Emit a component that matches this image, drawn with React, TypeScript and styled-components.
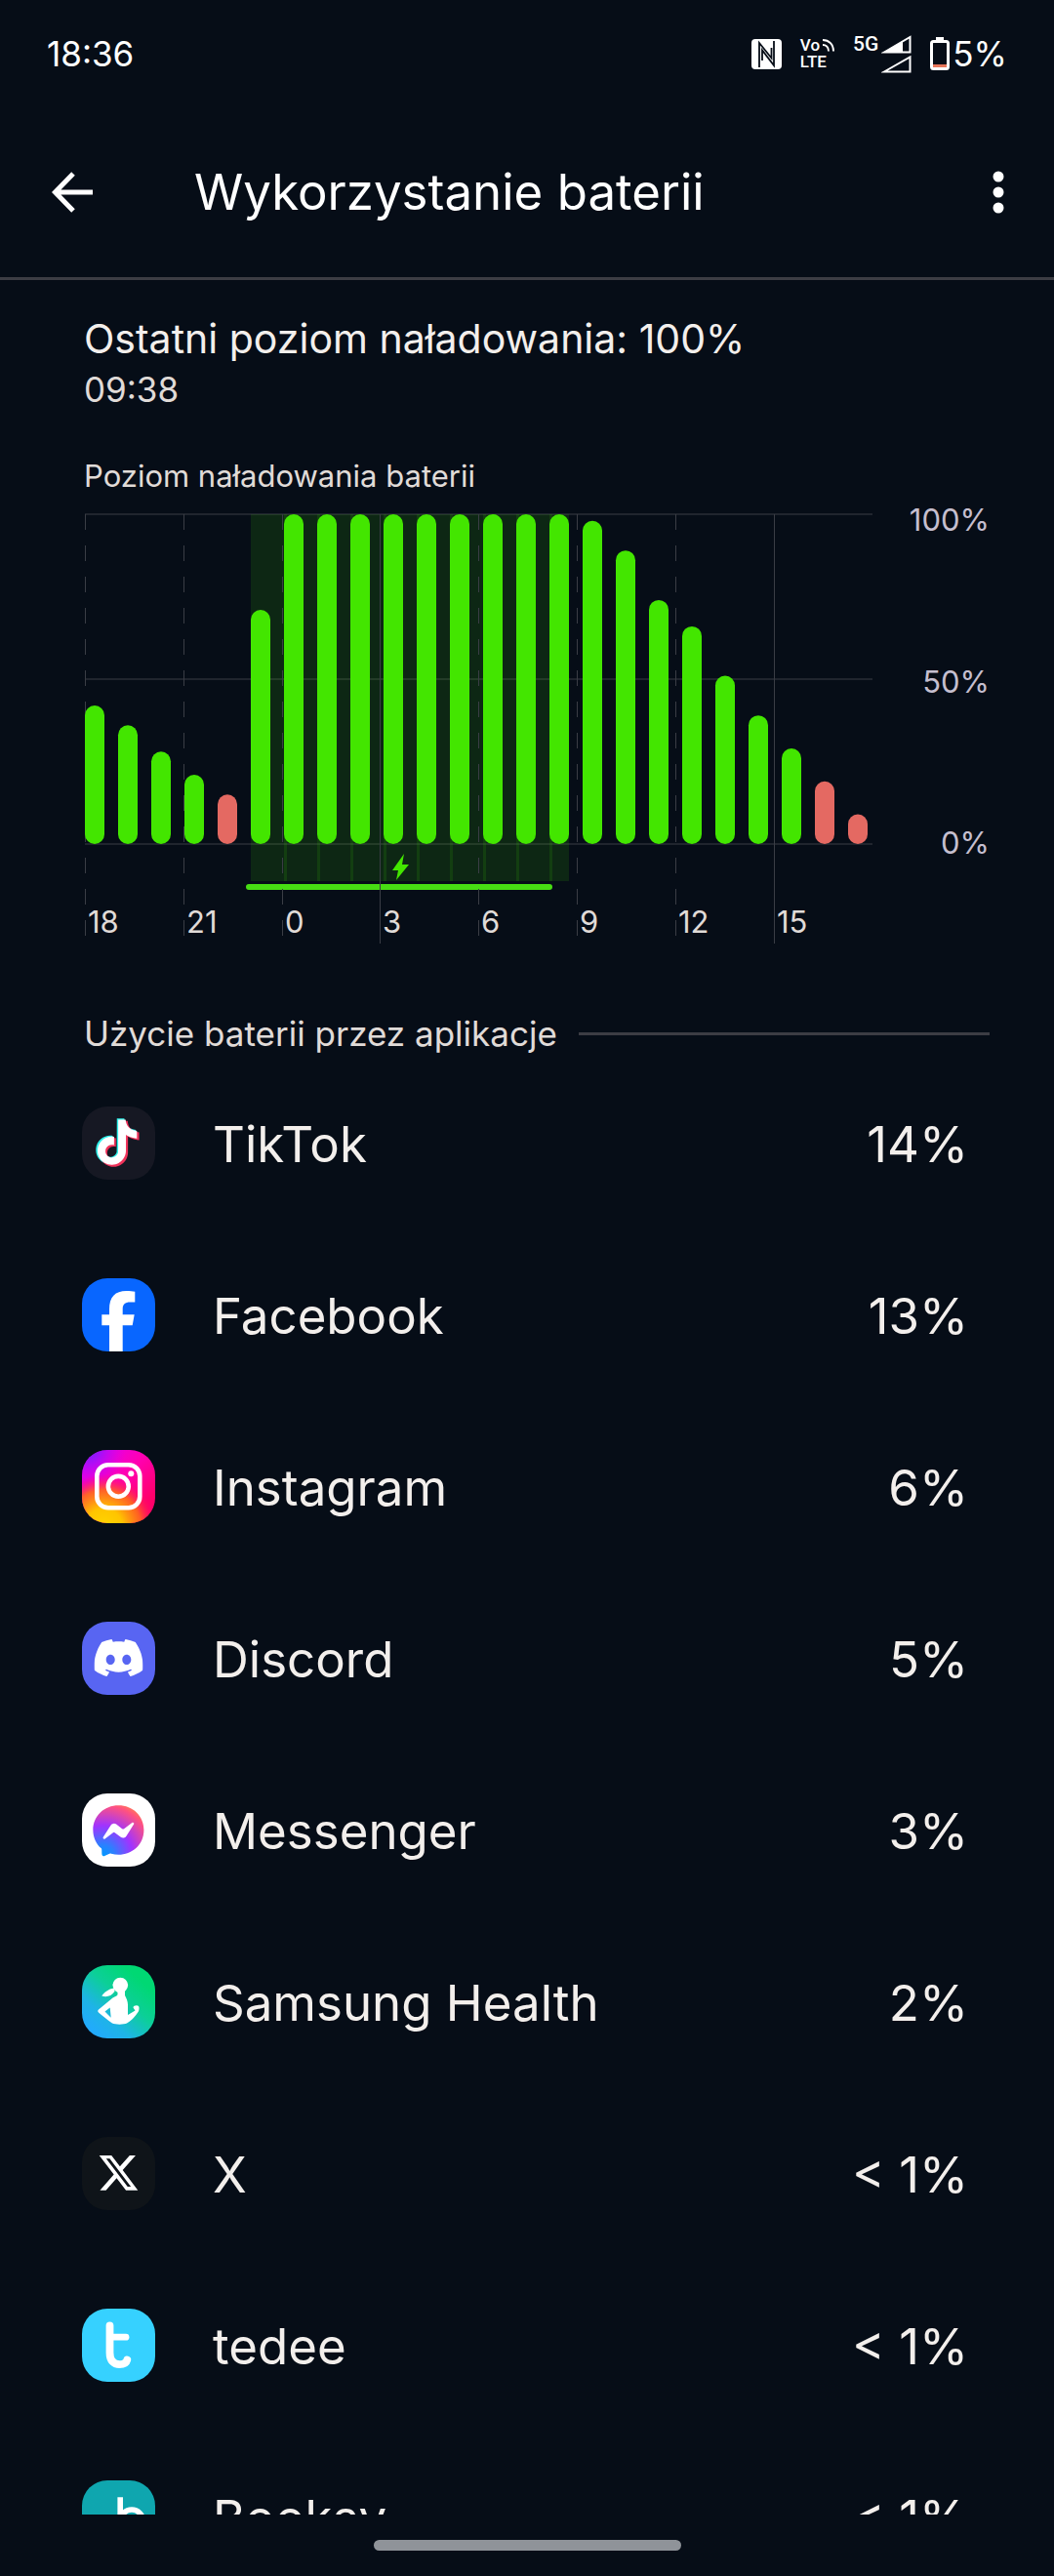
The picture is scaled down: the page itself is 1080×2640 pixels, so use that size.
import React from 'react';
import styled, { createGlobalStyle } from 'styled-components';
import { SiDiscord } from 'react-icons/si';

const color = {
  bg: '#060d17',
  text: '#f3efec',
  muted: '#e0dbd8',
  axis: '#c5bfcf',
  line: '#3c3d44',
  grid: '#20252e',
  tick: '#3a3d45',
  green: '#43e600',
  red: '#e46962',
};

const GlobalStyle = createGlobalStyle`
  * { box-sizing: border-box; }
  body {
    margin: 0;
    background: ${color.bg};
    color: ${color.text};
    font-family: Inter, Roboto, sans-serif;
  }
  h1, h2, p, ul { margin: 0; padding: 0; font-weight: 400; }
`;

const Screen = styled.div`
  display: flex;
  flex-direction: column;
  height: 100vh;
`;

/* ---------- status bar ---------- */

const StatusBar = styled.div`
  display: flex;
  flex: none;
  align-items: center;
  justify-content: space-between;
  height: 110px;
  padding: 0 48px;
  color: #fff;
  font-size: 35px;
  line-height: 44px;
`;

const StatusIcons = styled.div`
  display: flex;
  align-items: center;
  gap: 19px;
`;

const IconGroup = styled.div<{ $gap: number }>`
  display: flex;
  align-items: center;
  gap: ${(p) => p.$gap}px;
`;

const VoLte = styled.div`
  display: flex;
  flex-direction: column;
  font: 500 17px/17px Roboto, sans-serif;
`;

const VoRow = styled.div`
  display: flex;
  align-items: center;
  gap: 2px;
`;

const NetworkType = styled.span`
  align-self: flex-start;
  font: 500 21px/18px Roboto, sans-serif;
`;

function NfcIcon() {
  return (
    <svg width="31" height="31" viewBox="0 0 31 31" fill="none">
      <rect width="31" height="31" rx="4" fill="#fff" />
      <path d="M8 29V4L20.500 19.500V9M23 2V27L11 11.500V22" stroke={color.bg} strokeWidth="1.800" />
    </svg>
  );
}

function WavesIcon() {
  return (
    <svg width="13" height="13" viewBox="0 0 13 13" fill="none" stroke="#fff" strokeWidth="2">
      <path d="M1 1C7.500 1 12 5.500 12 12.500M1 6C4.500 6 7 8.500 7 12.500" />
    </svg>
  );
}

function SignalIcon() {
  return (
    <svg width="31" height="39" viewBox="0 0 31 39" fill="none" stroke="#fff" strokeWidth="2">
      <path d="M3 17.500L29.500 2V17.500Z" />
      <path d="M3 17.500L22 6V17.500Z" fill="#fff" stroke="none" />
      <path d="M3 37.500L29.500 22.500V37.500Z" />
    </svg>
  );
}

function BatteryIcon() {
  return (
    <svg width="20" height="34" viewBox="0 0 20 34">
      <path d="M6 0h8v4h-8z" fill="#fff" />
      <rect x="1.500" y="4.500" width="17" height="28" rx="2" fill="none" stroke="#fff" strokeWidth="3" />
      <rect x="3" y="28" width="14" height="3" fill="#e8765a" />
    </svg>
  );
}

/* ---------- app bar ---------- */

const AppBar = styled.header`
  display: flex;
  flex: none;
  align-items: center;
  height: 177px;
  padding: 0 21px 0 38px;
  border-bottom: 3px solid ${color.line};
  color: #fff;
`;

const IconButton = styled.button`
  display: grid;
  place-items: center;
  width: 72px;
  height: 72px;
  padding: 0;
  border: 0;
  background: none;
  color: inherit;
`;

const Title = styled.h1`
  flex: 1;
  margin-left: 89px;
  font-size: 51px;
  line-height: 62px;
`;

/* ---------- content ---------- */

const Content = styled.main`
  flex: 1;
  min-height: 0;
  padding: 36px 66px 0 86px;
  overflow-y: auto;
  scrollbar-width: none;
`;

const LastCharge = styled.p`
  font-size: 41px;
  line-height: 48px;
`;

const LastChargeTime = styled.p`
  margin-top: 6px;
  color: ${color.muted};
  font-size: 35px;
  line-height: 44px;
`;

const ChartLabel = styled.h2`
  margin-top: 47px;
  color: ${color.muted};
  font-size: 31px;
  line-height: 40px;
`;

const Chart = styled.div`
  display: flex;
  align-items: flex-start;
  margin-top: 6px;
`;

const Plot = styled.svg`
  flex: 1;
  min-width: 0;
  margin-top: 12px;
  overflow: visible;
  font-size: 31px;
`;

const Axis = styled.div`
  display: flex;
  flex: none;
  flex-direction: column;
  align-items: flex-end;
  justify-content: space-between;
  width: 120px;
  height: 369px;
  color: ${color.axis};
  font-size: 31px;
  line-height: 38px;
`;

const levels = [42, 36, 28, 21, 15, 71, 100, 100, 100, 100, 100, 100, 100, 100, 100, 98, 89, 74, 66, 51, 39, 29, 19, 9];
const hours = ['18', '21', '0', '3', '6', '9', '12', '15'];
const chargingFrom = 5;
const chargingTo = 14;
const lowLevel = 19;
const barPitch = 34;
const plotTop = 1;
const plotHeight = 338;
const plotBottom = plotTop + plotHeight;

function BatteryChart() {
  const charging = levels.map((_, i) => i).filter((i) => i >= chargingFrom && i <= chargingTo);
  return (
    <Plot viewBox="0 0 808 442" role="img" aria-label="Poziom naładowania baterii">
      {[0, 0.5, 1].map((f) => (
        <path key={f} d={`M1 ${plotTop + plotHeight * f}H808`} stroke={color.grid} strokeWidth="2" />
      ))}
      {charging.map((i) => (
        <rect
          key={i}
          x={1 + i * barPitch}
          y={plotTop}
          width={i === chargingTo ? 20 : 37}
          height="376"
          fill={color.green}
          fillOpacity="0.12"
        />
      ))}
      <path d="M169 383H477" stroke="#47dd13" strokeWidth="6" strokeLinecap="round" />
      {hours.map((h, i) => {
        const x = Math.round(i * 100.8) + 1.5;
        const solid = h === '3' || h === '15';
        return (
          <path
            key={h}
            d={`M${x} ${plotTop}V${solid ? 441 : 433}`}
            stroke={color.tick}
            strokeDasharray={solid ? undefined : '16 16'}
          />
        );
      })}
      {levels.map((level, i) => (
        <rect
          key={i}
          x={1 + i * barPitch}
          y={plotBottom - (plotHeight * level) / 100}
          width="20"
          height={(plotHeight * level) / 100}
          rx="10"
          fill={level <= lowLevel ? color.red : color.green}
        />
      ))}
      <path d="M328 349L316 366H322L320 376L333 360H326Z" fill={color.green} />
      {hours.map((h, i) => (
        <text key={h} x={Math.round(i * 100.8) + 4} y="430" fill={color.muted}>
          {h}
        </text>
      ))}
    </Plot>
  );
}

const SectionHeader = styled.div`
  display: flex;
  align-items: center;
  gap: 22px;
  margin-top: 68px;
  color: ${color.muted};
`;

const SectionTitle = styled.h2`
  font-size: 35px;
  line-height: 46px;
`;

const Rule = styled.div`
  flex: 1;
  height: 3px;
  background: ${color.line};
`;

const AppList = styled.ul`
  margin: 3px 22px 0 0;
  list-style: none;
`;

const AppRow = styled.li`
  display: flex;
  align-items: center;
  height: 176px;
  margin-left: -2px;
  font-size: 51px;
  line-height: 62px;
`;

const AppIcon = styled.svg`
  flex: none;
  width: 75px;
  height: 75px;
  margin: 0 59px 4px 0;
  border-radius: 26px;
`;

const AppName = styled.span`
  flex: 1;
`;

const Usage = styled.span`
  flex: none;
`;

const NavBar = styled.div`
  display: flex;
  flex: none;
  align-items: center;
  justify-content: center;
  height: 63px;
`;

const NavHandle = styled.div`
  width: 315px;
  height: 11px;
  border-radius: 6px;
  background: #8f9399;
`;

/* ---------- app icons, drawn on a 75 by 75 tile ---------- */

const note =
  'M12.525.02c1.310-.02 2.610-.01 3.910-.02.08 1.530.63 3.090 1.750 4.170 1.120 1.110 2.700 1.620 4.240 1.790v4.030c-1.440-.05-2.890-.35-4.200-.97-.57-.26-1.100-.59-1.620-.93-.01 2.920.01 5.840-.02 8.750-.08 1.400-.54 2.790-1.350 3.940-1.310 1.920-3.580 3.170-5.910 3.210-1.430.08-2.860-.31-4.080-1.030-2.020-1.190-3.440-3.370-3.650-5.710-.02-.5-.03-1-.01-1.490.18-1.900 1.120-3.720 2.580-4.960 1.660-1.440 3.980-2.130 6.150-1.720.02 1.480-.04 2.960-.04 4.440-.99-.32-2.150-.23-3.020.37-.63.41-1.110 1.040-1.360 1.750-.21.51-.15 1.070-.14 1.610.24 1.640 1.820 3.020 3.500 2.870 1.120-.01 2.190-.66 2.770-1.610.19-.33.4-.67.41-1.060.1-1.790.06-3.570.07-5.360.01-4.030-.01-8.050.02-12.070z';

const TikTokArt = () => (
  <>
    <rect width="75" height="75" fill="#161823" />
    <path d={note} transform="translate(11.200 12.200) scale(1.960)" fill="#2ef0ea" />
    <path d={note} transform="translate(14.600 14.800) scale(1.960)" fill="#f0335b" />
    <path d={note} transform="translate(13 13.400) scale(1.930)" fill="#fff" />
  </>
);

const FacebookArt = () => (
  <>
    <rect width="75" height="75" fill="#0866ff" />
    <path
      d="M28 75V48.300H20.300V37.300H28V32C28 19 34 13 45.500 13C49 13 52 13.300 54.300 13.800V24.600H49.500C44 24.600 41.700 27 41.700 31.500V37.300H53.700L51.700 48.300H41.700V75Z"
      fill="#fff"
    />
  </>
);

const InstagramArt = () => (
  <>
    <defs>
      <linearGradient id="igBase" x1="0.2" y1="0" x2="0.9" y2="0.7">
        <stop offset="0" stopColor="#e400f0" />
        <stop offset="0.5" stopColor="#ff00b4" />
        <stop offset="1" stopColor="#ff0069" />
      </linearGradient>
      <radialGradient id="igPurple" cx="0.1" cy="0" r="0.5">
        <stop offset="0" stopColor="#6a22ff" />
        <stop offset="1" stopColor="#c800ff" stopOpacity="0" />
      </radialGradient>
      <radialGradient id="igYellow" cx="0.3" cy="1.050" r="0.72">
        <stop offset="0" stopColor="#ffd600" />
        <stop offset="0.35" stopColor="#ffc400" />
        <stop offset="0.7" stopColor="#ff6a1a" stopOpacity="0.9" />
        <stop offset="1" stopColor="#ff0069" stopOpacity="0" />
      </radialGradient>
    </defs>
    <rect width="75" height="75" fill="url(#igBase)" />
    <rect width="75" height="75" fill="url(#igPurple)" />
    <rect width="75" height="75" fill="url(#igYellow)" />
    <g fill="none" stroke="#fff" strokeWidth="4.600">
      <rect x="15.300" y="15.300" width="44" height="44" rx="11.500" />
      <circle cx="37.300" cy="37.300" r="10.400" />
    </g>
    <circle cx="50.300" cy="24.300" r="3" fill="#fff" />
  </>
);

const DiscordArt = () => (
  <>
    <rect width="75" height="75" fill="#5865f2" />
    <SiDiscord x="12.500" y="12" size={50} color="#fff" />
  </>
);

const MessengerArt = () => (
  <>
    <defs>
      <radialGradient id="msg" cx="0.190" cy="0.990" r="1.080">
        <stop offset="0" stopColor="#0099ff" />
        <stop offset="0.2" stopColor="#2b80ff" />
        <stop offset="0.55" stopColor="#a033ff" />
        <stop offset="0.92" stopColor="#ff5280" />
        <stop offset="1" stopColor="#ff7061" />
      </radialGradient>
    </defs>
    <rect width="75" height="75" fill="#fff" />
    <path
      transform="translate(10.500 11.300) scale(0.105)"
      fill="url(#msg)"
      d="M256.550 8C116.520 8 8 110.340 8 248.570c0 72.300 29.710 134.780 78.070 177.940 8.350 7.510 6.630 11.860 8.050 58.230A19.920 19.920 0 0 0 122 502.310c52.910-23.300 53.590-25.140 62.560-22.700C337.850 521.800 504 423.700 504 248.570 504 110.340 396.590 8 256.550 8zm149.240 185.130l-73 115.570a37.370 37.370 0 0 1-53.910 9.930l-58.080-43.470a15 15 0 0 0-18 0l-78.370 59.440c-10.460 7.930-24.160-4.600-17.110-15.670l73-115.570a37.360 37.360 0 0 1 53.910-9.930l58.060 43.460a15 15 0 0 0 18 0l78.410-59.380c10.440-7.980 24.140 4.540 17.090 15.620z"
    />
  </>
);

const HealthArt = () => (
  <>
    <defs>
      <linearGradient id="health" x1="0.15" y1="0.950" x2="0.8" y2="0.2">
        <stop offset="0" stopColor="#22a9ff" />
        <stop offset="0.3" stopColor="#1eb4e6" />
        <stop offset="0.65" stopColor="#0ccf98" />
        <stop offset="1" stopColor="#00d873" />
      </linearGradient>
    </defs>
    <rect width="75" height="75" fill="url(#health)" />
    <g fill="#fff">
      <circle cx="39.300" cy="20.500" r="7.800" />
      <path d="M33 23.500C27 24.500 23 27.500 20.300 31.500C25 33 30 32 33.500 27Z" />
      <path
        fillRule="evenodd"
        d="M36.500 25H44V31C45.500 34 47 37 47 40.500V51L54.500 46.500L52.500 43.500C52.500 41.500 56.500 40.500 58 42C59 43.500 58.500 46.500 57.500 48C54 53 50 57.500 46 59.500C43 61 34 61 31 59.500C26 56 20.500 51.500 17 48.500C16 47.500 16 46.500 17 45.500L31.500 33.500C34 32 36.500 31.500 36.500 30ZM28.700 43.500L23.500 47.500L29.700 53.700Z"
      />
    </g>
  </>
);

const XArt = () => (
  <>
    <rect width="75" height="75" fill="#0f1419" />
    <path
      transform="translate(17.700 17) scale(1.650)"
      fill="#fff"
      d="M18.901 1.153h3.680l-8.040 9.190L24 22.846h-7.406l-5.800-7.584-6.638 7.584H.474l8.600-9.830L0 1.154h7.594l5.243 6.932ZM17.610 20.644h2.039L6.486 3.240H4.298Z"
    />
  </>
);

const TedeeArt = () => (
  <>
    <rect width="75" height="75" fill="#36d1ff" />
    <g fill="none" stroke="#fff" strokeLinecap="round">
      <path d="M28.500 17.300V45C28.500 53.500 32.500 57.200 38.500 57.200C42.500 57.200 45.500 55.500 46.300 52.500" strokeWidth="7.800" />
      <path d="M29 29.200H45" strokeWidth="6.800" />
    </g>
  </>
);

const BooksyArt = () => (
  <>
    <rect width="75" height="75" fill="#0fa6af" />
    <g fill="none" stroke="#fff" strokeWidth="5.600">
      <path d="M39.200 17.300V52" />
      <circle cx="51" cy="41.500" r="11.500" />
    </g>
  </>
);

const apps = [
  { name: 'TikTok', usage: '14%', Art: TikTokArt },
  { name: 'Facebook', usage: '13%', Art: FacebookArt },
  { name: 'Instagram', usage: '6%', Art: InstagramArt },
  { name: 'Discord', usage: '5%', Art: DiscordArt },
  { name: 'Messenger', usage: '3%', Art: MessengerArt },
  { name: 'Samsung Health', usage: '2%', Art: HealthArt },
  { name: 'X', usage: '< 1%', Art: XArt },
  { name: 'tedee', usage: '< 1%', Art: TedeeArt },
  { name: 'Booksy', usage: '< 1%', Art: BooksyArt },
];

export default function App() {
  return (
    <Screen>
      <GlobalStyle />
      <StatusBar>
        <span>18:36</span>
        <StatusIcons>
          <NfcIcon />
          <VoLte>
            <VoRow>
              Vo
              <WavesIcon />
            </VoRow>
            <span>LTE</span>
          </VoLte>
          <IconGroup $gap={3}>
            <NetworkType>5G</NetworkType>
            <SignalIcon />
          </IconGroup>
          <IconGroup $gap={3}>
            <BatteryIcon />
            <span>5%</span>
          </IconGroup>
        </StatusIcons>
      </StatusBar>

      <AppBar>
        <IconButton type="button" aria-label="Wstecz">
          <svg width="42" height="42" viewBox="0 0 42 42" fill="none" stroke="currentColor" strokeWidth="5">
            <path d="M22 2L3.500 21L22 40M3.500 21H42" />
          </svg>
        </IconButton>
        <Title>Wykorzystanie baterii</Title>
        <IconButton type="button" aria-label="Więcej opcji">
          <svg width="12" height="44" viewBox="0 0 12 44" fill="currentColor">
            <circle cx="6" cy="6" r="5.500" />
            <circle cx="6" cy="22" r="5.500" />
            <circle cx="6" cy="38" r="5.500" />
          </svg>
        </IconButton>
      </AppBar>

      <Content>
        <LastCharge>Ostatni poziom naładowania: 100%</LastCharge>
        <LastChargeTime>09:38</LastChargeTime>
        <ChartLabel>Poziom naładowania baterii</ChartLabel>
        <Chart>
          <BatteryChart />
          <Axis>
            <span>100%</span>
            <span>50%</span>
            <span>0%</span>
          </Axis>
        </Chart>

        <SectionHeader>
          <SectionTitle>Użycie baterii przez aplikacje</SectionTitle>
          <Rule />
        </SectionHeader>
        <AppList>
          {apps.map(({ name, usage, Art }) => (
            <AppRow key={name}>
              <AppIcon viewBox="0 0 75 75" aria-hidden="true">
                <Art />
              </AppIcon>
              <AppName>{name}</AppName>
              <Usage>{usage}</Usage>
            </AppRow>
          ))}
        </AppList>
      </Content>

      <NavBar>
        <NavHandle />
      </NavBar>
    </Screen>
  );
}
